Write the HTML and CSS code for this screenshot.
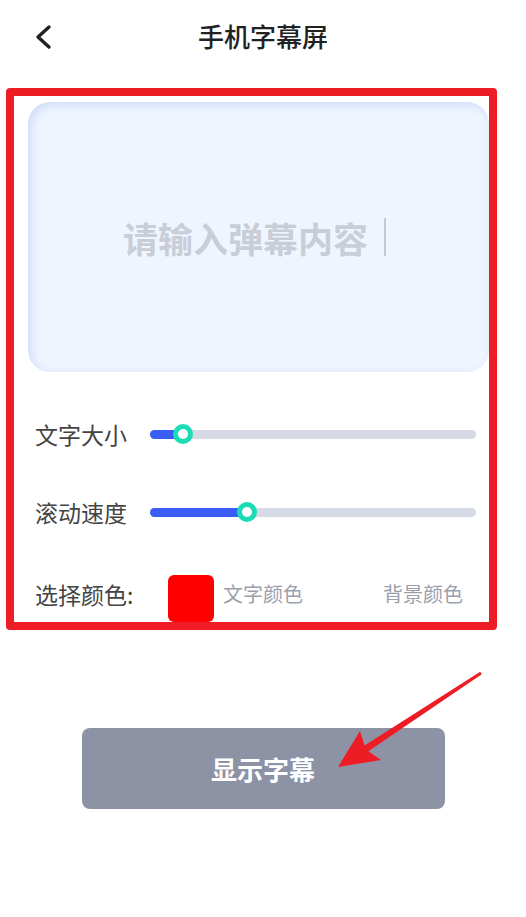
FILE: index.html
```html
<!DOCTYPE html>
<html lang="zh-CN">
<head>
  <meta charset="UTF-8">
  <meta name="viewport" content="width=device-width, initial-scale=1">
  <title>手机字幕屏</title>
  <link rel="stylesheet" href="styles.css">
</head>
<body>

  <div class="page">
    <!-- 顶部导航 -->
    <div class="header">
      <svg class="back" width="24" height="28" viewBox="0 0 24 28">
        <polyline points="16,4 5,14 16,24" fill="none" stroke="#222" stroke-width="3.4" stroke-linecap="round" stroke-linejoin="round"/>
      </svg>
      <h1 class="title">手机字幕屏</h1>
    </div>

    <!-- 设置区域 -->
    <div class="panel">
      <div class="input-card">
        <span class="placeholder">请输入弹幕内容</span>
        <span class="caret"></span>
      </div>

      <div class="row">
        <span class="label">文字大小</span>
        <div class="track">
          <div class="fill" style="width: 33px"><span class="thumb"></span></div>
        </div>
      </div>

      <div class="row">
        <span class="label">滚动速度</span>
        <div class="track">
          <div class="fill" style="width: 97px"><span class="thumb"></span></div>
        </div>
      </div>

      <div class="row color-row">
        <span class="label">选择颜色:</span>
        <span class="swatch"></span>
        <span class="option">文字颜色</span>
        <span class="option right">背景颜色</span>
      </div>
    </div>

    <button class="show-btn">显示字幕</button>

    <!-- 标注箭头 -->
    <svg class="arrow" width="526" height="917" viewBox="0 0 526 917">
      <polygon points="338,767 360,731 364.5,745.4 480.2,671.7 481.8,674.3 368.3,751.2 381,760" fill="#ee1c25"/>
    </svg>
  </div>

</body>
</html>
```

FILE: styles.css
```css
body {
  margin: 0;
  font-family: "Noto Sans CJK SC", "Noto Sans", sans-serif;
  background-color: #fff;
  color: #444;
}

.page {
  position: relative;
  width: 526px;
  height: 917px;
  overflow: hidden;
}

.header {
  position: relative;
  height: 70px;
  display: flex;
  align-items: center;
  justify-content: center;
}

.back {
  position: absolute;
  left: 33px;
  top: 23px;
}

.title {
  margin: 0;
  font-size: 26px;
  font-weight: 500;
  color: #222;
}

.panel {
  margin: 18px 0 0 6px;
  width: 475px;
  border: 8px solid #ee1c25;
  border-radius: 4px;
}

.input-card {
  margin: 6px 0 0 14px;
  height: 270px;
  display: flex;
  align-items: center;
  justify-content: center;
  gap: 16px;
  padding-right: 8px;
  background-color: #eef5ff;
  border-radius: 22px;
  box-shadow: inset 3px 3px 8px rgba(170, 188, 235, 0.45);
}

.placeholder {
  font-size: 35px;
  font-weight: 700;
  color: #c9cdd8;
}

.caret {
  width: 2px;
  height: 38px;
  background-color: #c4c8d2;
}

.row {
  display: flex;
  align-items: center;
  height: 40px;
  padding: 0 13px 0 21px;
  margin-top: 38px;
}

.input-card + .row {
  margin-top: 42px;
}

.label {
  width: 115px;
  flex-shrink: 0;
  font-size: 23px;
  color: #444;
}

.track {
  flex: 1;
  height: 9px;
  border-radius: 5px;
  background-color: #d6d9e6;
}

.fill {
  position: relative;
  height: 100%;
  border-radius: 5px;
  background-color: #3a5ef5;
}

.thumb {
  position: absolute;
  right: -10px;
  top: -5.5px;
  width: 10px;
  height: 10px;
  border: 5px solid #1cdcb6;
  border-radius: 50%;
  background-color: #fff;
}

.color-row {
  height: 47px;
  margin-top: 43px;
  padding-right: 26px;
}

.color-row .label,
.option {
  margin-bottom: 10px;
}

.swatch {
  width: 46px;
  height: 47px;
  margin-left: 18px;
  border-radius: 6px;
  background-color: #ff0000;
}

.option {
  margin-left: 9px;
  font-size: 20px;
  color: #9b9fac;
}

.option.right {
  margin-left: auto;
}

.show-btn {
  display: block;
  width: 363px;
  height: 81px;
  margin: 98px auto 0;
  border: none;
  border-radius: 8px;
  background-color: #8d92a4;
  color: #fff;
  font-family: inherit;
  font-size: 26px;
  font-weight: 700;
}

.arrow {
  position: absolute;
  left: 0;
  top: 0;
  pointer-events: none;
}
```
